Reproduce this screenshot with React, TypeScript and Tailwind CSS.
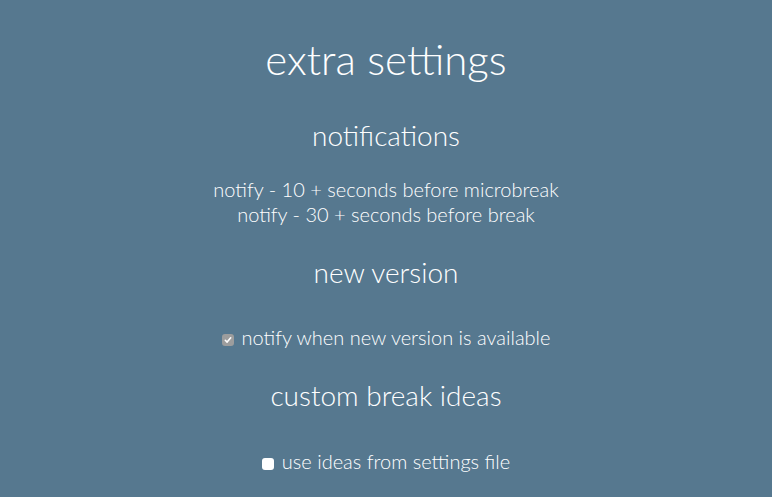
export default function App() {
  return (
    <div className="min-h-[497px] w-full bg-[#56788f] text-white text-center font-['Lato',sans-serif] font-light">
      <h1 className="pt-[34px] text-[42px] leading-[50px]">extra settings</h1>
      <h2 className="mt-[34px] text-[28px] leading-[34px]">notifications</h2>
      <div className="mt-[25px] text-[20px] leading-[25px]">
        <p>notify - 10 + seconds before microbreak</p>
        <p>notify - 30 + seconds before break</p>
      </div>
      <h2 className="mt-[28px] text-[28px] leading-[34px]">new version</h2>
      <label className="mt-[36px] flex items-center justify-center gap-[8px] text-[20px] leading-[25px]">
        <span className="mt-[4px] flex h-[12px] w-[12px] items-center justify-center rounded-[3px] bg-[#9d9d9d]">
          <svg viewBox="0 0 12 12" className="h-[12px] w-[12px]" fill="none" stroke="white" strokeWidth="1.6" strokeLinecap="round" strokeLinejoin="round">
            <path d="M3.3 6.3 L5.1 8.1 L8.7 3.8" />
          </svg>
        </span>
        notify when new version is available
      </label>
      <h2 className="mt-[28px] text-[28px] leading-[34px]">custom break ideas</h2>
      <label className="mt-[37px] flex items-center justify-center gap-[8px] text-[20px] leading-[25px]">
        <input type="checkbox" className="mt-[4px] h-[12px] w-[12px] appearance-none rounded-[3px] bg-white" />
        use ideas from settings file
      </label>
    </div>
  );
}
